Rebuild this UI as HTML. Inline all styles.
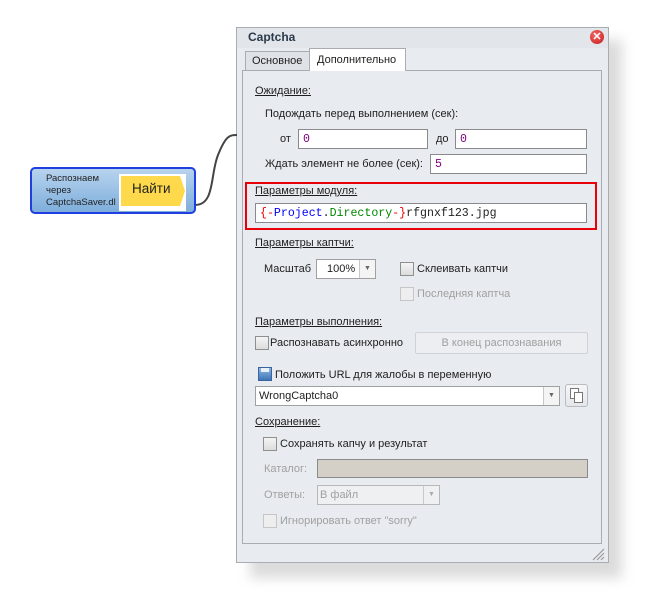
<!DOCTYPE html>
<html><head><meta charset="utf-8"><style>
*{box-sizing:border-box;margin:0;padding:0}
body{width:645px;height:594px;background:#fff;position:relative;overflow:hidden;font-family:"Liberation Sans",sans-serif;font-size:11px;color:#1e1e1e}
.a{position:absolute;white-space:nowrap}
.u{text-decoration:underline}
.in{position:absolute;background:#fff;border:1px solid #8a8a8a;font-family:"Liberation Mono",monospace;font-size:11.6px;color:#800080;padding:3px 0 0 4px}
.cb{position:absolute;width:14px;height:14px;border:1px solid #8e8f8f;background:linear-gradient(#f4f4f4,#dcdcdc)}
.dis{color:#a0a0a0}
.cbd{border-color:#c6c6c6;background:#eee}
.lab{transform:translateY(-50%)}
</style></head><body>
<div class="a" style="left:250px;top:40px;width:372px;height:538px;background:#ccc;filter:blur(6px);opacity:.7"></div>
<div class="a" style="left:236px;top:27px;width:373px;height:536px;background:#e8ebf0;border:1px solid #a9acb1"></div>
<div class="a" style="left:237px;top:28px;width:371px;height:20px;background:#e2e5ea"></div>
<div class="a lab" style="left:248px;top:37px;font-weight:bold;font-size:12px;color:#2a3a4a">Captcha</div>
<div class="a" style="left:590px;top:30px;width:14px;height:14px;border-radius:50%;background:radial-gradient(circle at 40% 35%,#f26a6a,#c81818);color:#fff;font-size:11px;font-weight:bold;line-height:14px;text-align:center">✕</div>
<div class="a" style="left:245px;top:51px;width:65px;height:20px;background:#dfe2e6;border:1px solid #a9acb1;border-bottom:none"></div>
<div class="a lab" style="left:252px;top:61px">Основное</div>
<div class="a" style="left:242px;top:70px;width:360px;height:474px;border:1px solid #a9acb1;background:#e8ebf0"></div>
<div class="a" style="left:309px;top:48px;width:97px;height:23px;background:#fff;border:1px solid #a9acb1;border-bottom:none"></div>
<div class="a lab" style="left:317px;top:60px">Дополнительно</div>
<div class="a lab u" style="left:255px;top:91px">Ожидание:</div>
<div class="a lab" style="left:265px;top:114px">Подождать перед выполнением (сек):</div>
<div class="a lab" style="left:280px;top:139px">от</div>
<div class="in" style="left:298px;top:129px;width:130px;height:20px">0</div>
<div class="a lab" style="left:436px;top:139px">до</div>
<div class="in" style="left:455px;top:129px;width:132px;height:20px">0</div>
<div class="a lab" style="left:265px;top:164px">Ждать элемент не более (сек):</div>
<div class="in" style="left:430px;top:154px;width:157px;height:20px">5</div>
<div class="a" style="left:245px;top:182px;width:352px;height:48px;border:2px solid #e8000b"></div>
<div class="a lab u" style="left:255px;top:191px">Параметры модуля:</div>
<div class="in" style="left:255px;top:203px;width:332px;height:20px;color:#222"><span style="color:#e00">{-</span><span style="color:#00f">Project</span>.<span style="color:#080">Directory</span><span style="color:#e00">-}</span>rfgnxf123.jpg</div>
<div class="a lab u" style="left:255px;top:243px">Параметры каптчи:</div>
<div class="a lab" style="left:264px;top:269px">Масштаб</div>
<div class="a" style="left:316px;top:259px;width:60px;height:20px;background:#fff;border:1px solid #a0a0a0"></div>
<div class="a lab" style="left:327px;top:269px">100%</div>
<div class="a" style="left:359px;top:260px;width:16px;height:18px;border-left:1px solid #c8c8c8;background:#f4f4f4;font-size:7px;color:#666;text-align:center;line-height:18px">▼</div>
<div class="cb" style="left:400px;top:262px"></div>
<div class="a lab" style="left:417px;top:269px">Склеивать каптчи</div>
<div class="cb cbd" style="left:400px;top:287px"></div>
<div class="a lab dis" style="left:417px;top:294px">Последняя каптча</div>
<div class="a lab u" style="left:255px;top:322px">Параметры выполнения:</div>
<div class="cb" style="left:255px;top:336px"></div>
<div class="a lab" style="left:270px;top:343px">Распознавать асинхронно</div>
<div class="a" style="left:415px;top:332px;width:173px;height:22px;border:1px solid #cfd2d6;border-radius:2px;background:#eceef1;color:#a0a0a0;text-align:center;line-height:20px">В конец распознавания</div>
<div class="a" style="left:258px;top:367px;width:14px;height:14px;background:linear-gradient(#8fb6e0,#3f76b8);border:1px solid #3a64a0"></div>
<div class="a" style="left:261px;top:368px;width:8px;height:4px;background:#e9f0f8"></div>
<div class="a lab" style="left:275px;top:375px">Положить URL для жалобы в переменную</div>
<div class="a" style="left:255px;top:386px;width:305px;height:20px;background:#fff;border:1px solid #a0a0a0"></div>
<div class="a lab" style="left:259px;top:396px">WrongCaptcha0</div>
<div class="a" style="left:543px;top:387px;width:16px;height:18px;border-left:1px solid #c8c8c8;background:#f4f4f4;font-size:7px;color:#666;text-align:center;line-height:18px">▼</div>
<div class="a" style="left:565px;top:384px;width:23px;height:23px;border:1px solid #b8bbc0;border-radius:3px;background:linear-gradient(#f6f6f6,#e4e6ea)"></div>
<div class="a" style="left:570px;top:388px;width:9px;height:11px;border:1px solid #777;background:#fff"></div>
<div class="a" style="left:574px;top:392px;width:9px;height:11px;border:1px solid #777;background:#fff"></div>
<div class="a lab u" style="left:255px;top:422px">Сохранение:</div>
<div class="cb" style="left:263px;top:437px"></div>
<div class="a lab" style="left:280px;top:444px">Сохранять капчу и результат</div>
<div class="a lab dis" style="left:264px;top:469px">Каталог:</div>
<div class="a" style="left:317px;top:459px;width:271px;height:19px;background:#d4d0c8;border:1px solid #8a8a8a"></div>
<div class="a lab dis" style="left:264px;top:495px">Ответы:</div>
<div class="a" style="left:317px;top:485px;width:123px;height:20px;background:#eef0f2;border:1px solid #b8b8b8"></div>
<div class="a lab dis" style="left:320px;top:495px">В файл</div>
<div class="a" style="left:423px;top:486px;width:16px;height:18px;border-left:1px solid #c8c8c8;font-size:7px;color:#aaa;text-align:center;line-height:18px">▼</div>
<div class="cb cbd" style="left:263px;top:514px"></div>
<div class="a lab dis" style="left:280px;top:521px">Игнорировать ответ "sorry"</div>
<svg class="a" style="left:590px;top:547px" width="16" height="14"><path d="M3 13L14 2M7 13L14 6M11 13L14 10" stroke="#999" stroke-width="1.2"/></svg>
<svg class="a" style="left:190px;top:125px" width="50" height="95"><path d="M5 80C25 80 20 50 28 30S40 10 47 10" fill="none" stroke="#444" stroke-width="2"/></svg>
<div class="a" style="left:30px;top:167px;width:166px;height:47px;border:2px solid #1f3fe0;border-radius:5px;background:linear-gradient(#b7d3ee,#7eaedc)"></div>
<div class="a" style="left:119px;top:174px;width:67px;height:37px;background:#fff"></div>
<svg class="a" style="left:120px;top:175px" width="66" height="32"><path d="M1 1H60L65 16L60 31H1Z" fill="#fdd94b"/></svg>
<div class="a" style="left:132px;top:181px;font-size:13.5px;color:#222">Найти</div>
<div class="a" style="left:46px;top:173px;font-size:9.5px;line-height:12px;color:#222">Распознаем<br>через<br>CaptchaSaver.dl</div>
</body></html>
